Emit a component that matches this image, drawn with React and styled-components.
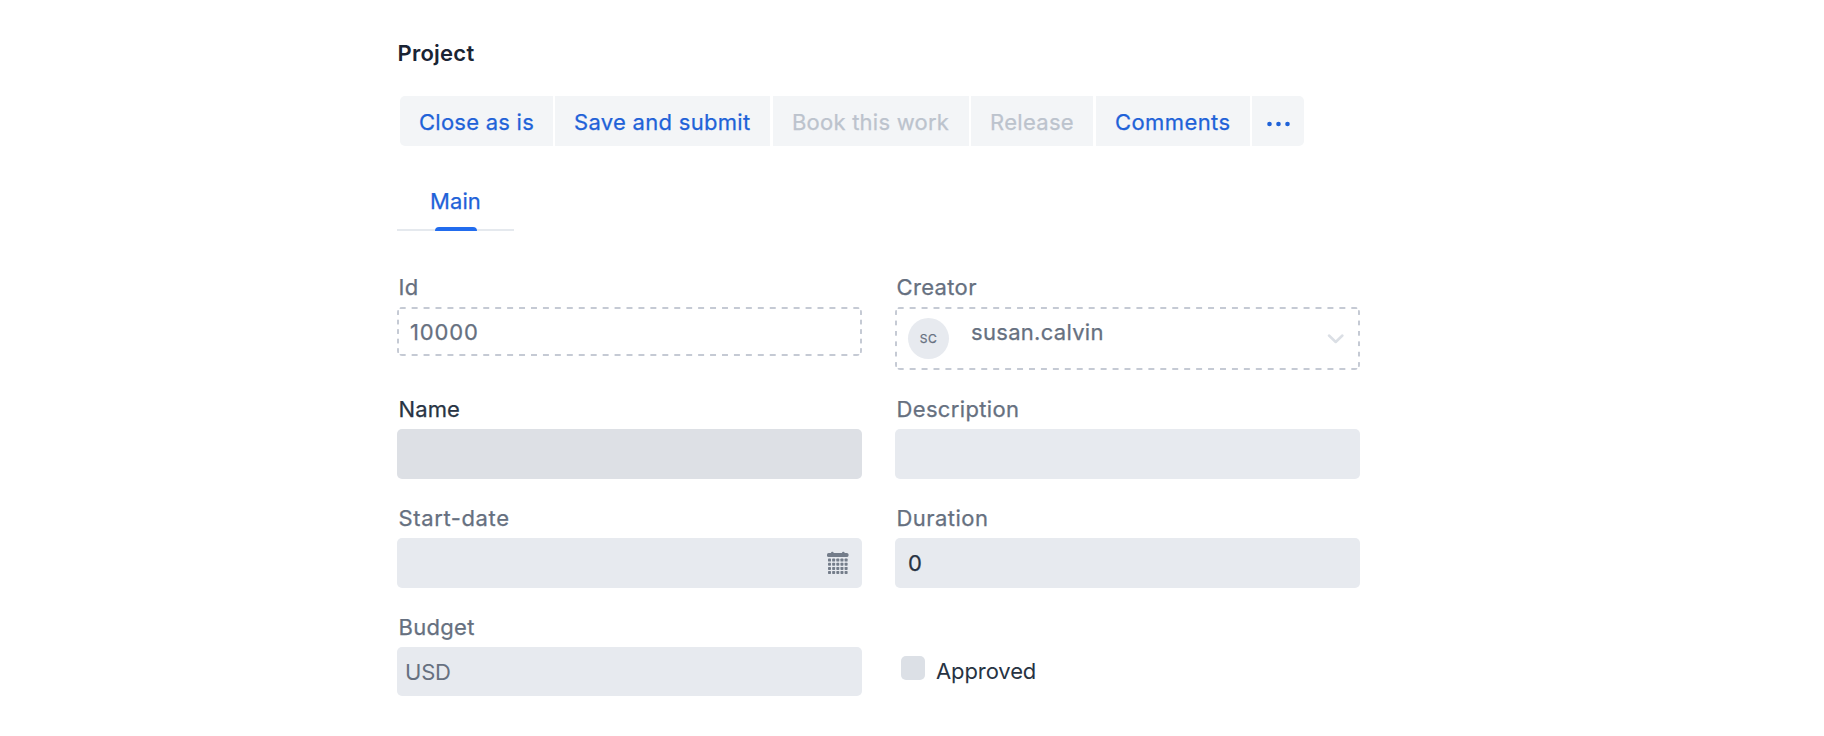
import React from "react";
import styled, { createGlobalStyle, css } from "styled-components";

const GlobalStyle = createGlobalStyle`
  * { box-sizing: border-box; }
  body {
    margin: 0;
    background: #fff;
    font-family: Inter, "Liberation Sans", sans-serif;
    font-size: 22px;
    -webkit-font-smoothing: antialiased;
  }
`;

/* A weight between regular and medium. */
const bookWeight = css`
  font-weight: 400;
  -webkit-text-stroke: 0.25px currentColor;
`;

const Page = styled.main`
  padding: 38px 0 0 397px;
  height: 736px;
  overflow: hidden;
`;

const Title = styled.h1`
  margin: 0 0 0 0.5px;
  font-size: 22px;
  line-height: 30px;
  font-weight: 600;
  letter-spacing: 0.25px;
  color: #1a2434;
`;

const Toolbar = styled.div`
  display: flex;
  height: 50px;
  margin: 28px 0 0 3px;
  width: 904px;
  border-radius: 5px;
  overflow: hidden;
`;

const ToolButton = styled.button`
  flex: none;
  width: ${(p) => p.$width}px;
  margin: 0 ${(p) => p.$gap ?? 2}px 0 0;
  padding: 0 0 0 ${(p) => p.$inset ?? 19}px;
  border: 0;
  background: #f3f5f7;
  font: 400 22px/52px Inter, "Liberation Sans", sans-serif;
  ${bookWeight}
  letter-spacing: ${(p) => p.$tracking ?? 0.3}px;
  text-align: left;
  white-space: nowrap;
  color: ${(p) => (p.disabled ? "#bcc3cd" : "#1f62d8")};
`;

const Dots = styled.svg`
  display: block;
  width: 24px;
  height: 6px;
  margin-top: 5px;
  fill: currentColor;
`;

const Tabs = styled.nav`
  display: flex;
  margin-top: 40px;
`;

const Tab = styled.div`
  position: relative;
  width: 117px;
  height: 45px;
  padding-left: 33px;
  border-bottom: 2px solid #e5e9ee;
  line-height: 30px;
  ${bookWeight}
  letter-spacing: 0.1px;
  color: #1f62d8;

  &::after {
    content: "";
    position: absolute;
    left: 38px;
    bottom: -2px;
    width: 42px;
    height: 4px;
    border-radius: 4px 4px 0 0;
    background: #226cee;
  }
`;

const Form = styled.form`
  display: grid;
  grid-template-columns: 465px 465px;
  column-gap: 33px;
  row-gap: 24px;
  align-items: start;
  margin-top: 41px;
`;

const Field = styled.div`
  display: flex;
  flex-direction: column;
  gap: 5px;
`;

const Label = styled.label`
  padding-left: 1.5px;
  line-height: 30px;
  ${bookWeight}
  letter-spacing: ${(p) => p.$tracking ?? 0.35}px;
  color: ${(p) => (p.$active ? "#283444" : "#667080")};
`;

/* Wide dashes: one repeating tile per side, clipped by the rounded corners. */
const dash = "#c5cad4";
const ReadonlyBox = styled.div`
  display: flex;
  height: ${(p) => p.$height}px;
  padding: 2px 16px 2px 13px;
  border-radius: 5px;
  background-image:
    linear-gradient(90deg, ${dash} 6px, transparent 6px),
    linear-gradient(90deg, ${dash} 6px, transparent 6px),
    linear-gradient(180deg, ${dash} 4.5px, transparent 4.5px),
    linear-gradient(180deg, ${dash} 4.5px, transparent 4.5px);
  background-size:
    11.94px 2px,
    11.94px 2px,
    2px ${(p) => p.$period}px,
    2px ${(p) => p.$period}px;
  background-position: 2.7px 0, 2.7px 100%, 0 3.2px, 100% 3.2px;
  background-repeat: repeat-x, repeat-x, repeat-y, repeat-y;
  line-height: 46px;
  ${bookWeight}
  letter-spacing: ${(p) => p.$tracking}px;
  color: #667080;
`;

const InputBox = styled.div`
  display: flex;
  align-items: center;
  justify-content: space-between;
  height: ${(p) => p.$height ?? 50}px;
  padding: 0 13px;
  border-radius: 5px;
  background: ${(p) => (p.$active ? "#dde0e5" : "#e7eaef")};
  ${bookWeight}
  color: #273343;
`;

const Prefix = styled.span`
  margin-left: -5px;
  line-height: 30px;
  padding-top: 1px;
  -webkit-text-stroke: 0;
  letter-spacing: -0.2px;
  color: #667080;
`;

const Avatar = styled.span`
  flex: none;
  width: 41px;
  height: 41px;
  margin: 9px 22px 0 0;
  border-radius: 50%;
  background: #e7eaef;
  font-size: 12px;
  line-height: 41px;
  text-align: center;
  letter-spacing: 0.4px;
`;

const Chevron = styled.svg`
  width: 17px;
  height: 11px;
  margin: 24px 0 0 auto;
`;

const CalendarIcon = styled.svg`
  width: 22px;
  height: 24px;
  margin-left: auto;
`;

const CheckRow = styled.label`
  display: flex;
  gap: 11px;
  margin: 44px 0 0 6px;
  line-height: 30px;
  letter-spacing: -0.1px;
  color: #273343;
`;

const CheckBox = styled.span`
  width: 24px;
  height: 24px;
  border-radius: 5px;
  background: #dce0e6;
`;

const dotRows = [0, 1, 2, 3];
const dotColumns = [0, 1, 2, 3, 4];

export default function App() {
  return (
    <>
      <GlobalStyle />
      <Page>
        <Title>Project</Title>
        <Toolbar>
          <ToolButton $width={153} $tracking={0.25}>Close as is</ToolButton>
          <ToolButton $width={215} $gap={3}>Save and submit</ToolButton>
          <ToolButton $width={196} $tracking={0.23} disabled>Book this work</ToolButton>
          <ToolButton $width={122} $gap={3} disabled>Release</ToolButton>
          <ToolButton $width={154} $tracking={0.4}>Comments</ToolButton>
          <ToolButton $width={52} $gap={0} $inset={15} aria-label="More">
            <Dots viewBox="0 0 24 6">
              <circle cx="2.5" cy="3" r="2.3" />
              <circle cx="11.5" cy="3" r="2.3" />
              <circle cx="20.5" cy="3" r="2.3" />
            </Dots>
          </ToolButton>
        </Toolbar>
        <Tabs>
          <Tab>Main</Tab>
        </Tabs>
        <Form>
          <Field>
            <Label>Id</Label>
            <ReadonlyBox $height={49} $period={9.5} $tracking={0.85}>10000</ReadonlyBox>
          </Field>
          <Field>
            <Label>Creator</Label>
            <ReadonlyBox $height={63} $period={10.4} $tracking={0.3}>
              <Avatar>SC</Avatar>
              susan.calvin
              <Chevron viewBox="0 0 17 11" fill="none" stroke="#dbdfe5" strokeWidth="2.5" strokeLinecap="round" strokeLinejoin="round">
                <path d="M2 2.5 8.7 9 15.4 2.5" />
              </Chevron>
            </ReadonlyBox>
          </Field>
          <Field>
            <Label $active $tracking={0.1}>Name</Label>
            <InputBox $active />
          </Field>
          <Field>
            <Label>Description</Label>
            <InputBox />
          </Field>
          <Field>
            <Label $tracking={0.62}>Start-date</Label>
            <InputBox>
              <CalendarIcon viewBox="0 0 22 24" fill="#747d8a">
                <rect x="0" y="2" width="21.5" height="4" rx="1.6" />
                <rect x="4" y="0.7" width="2.6" height="3" rx="1.2" />
                <rect x="15" y="0.7" width="2.6" height="3" rx="1.2" />
                {dotRows.map((r) =>
                  dotColumns.map((c) => (
                    <rect key={`${r}-${c}`} x={1 + c * 4.15} y={7.6 + r * 4.15} width="3" height="3" rx="0.7" />
                  ))
                )}
              </CalendarIcon>
            </InputBox>
          </Field>
          <Field>
            <Label $tracking={0.45}>Duration</Label>
            <InputBox>0</InputBox>
          </Field>
          <Field>
            <Label $tracking={0.3}>Budget</Label>
            <InputBox $height={49}>
              <Prefix>USD</Prefix>
            </InputBox>
          </Field>
          <CheckRow>
            <CheckBox />
            Approved
          </CheckRow>
        </Form>
      </Page>
    </>
  );
}
